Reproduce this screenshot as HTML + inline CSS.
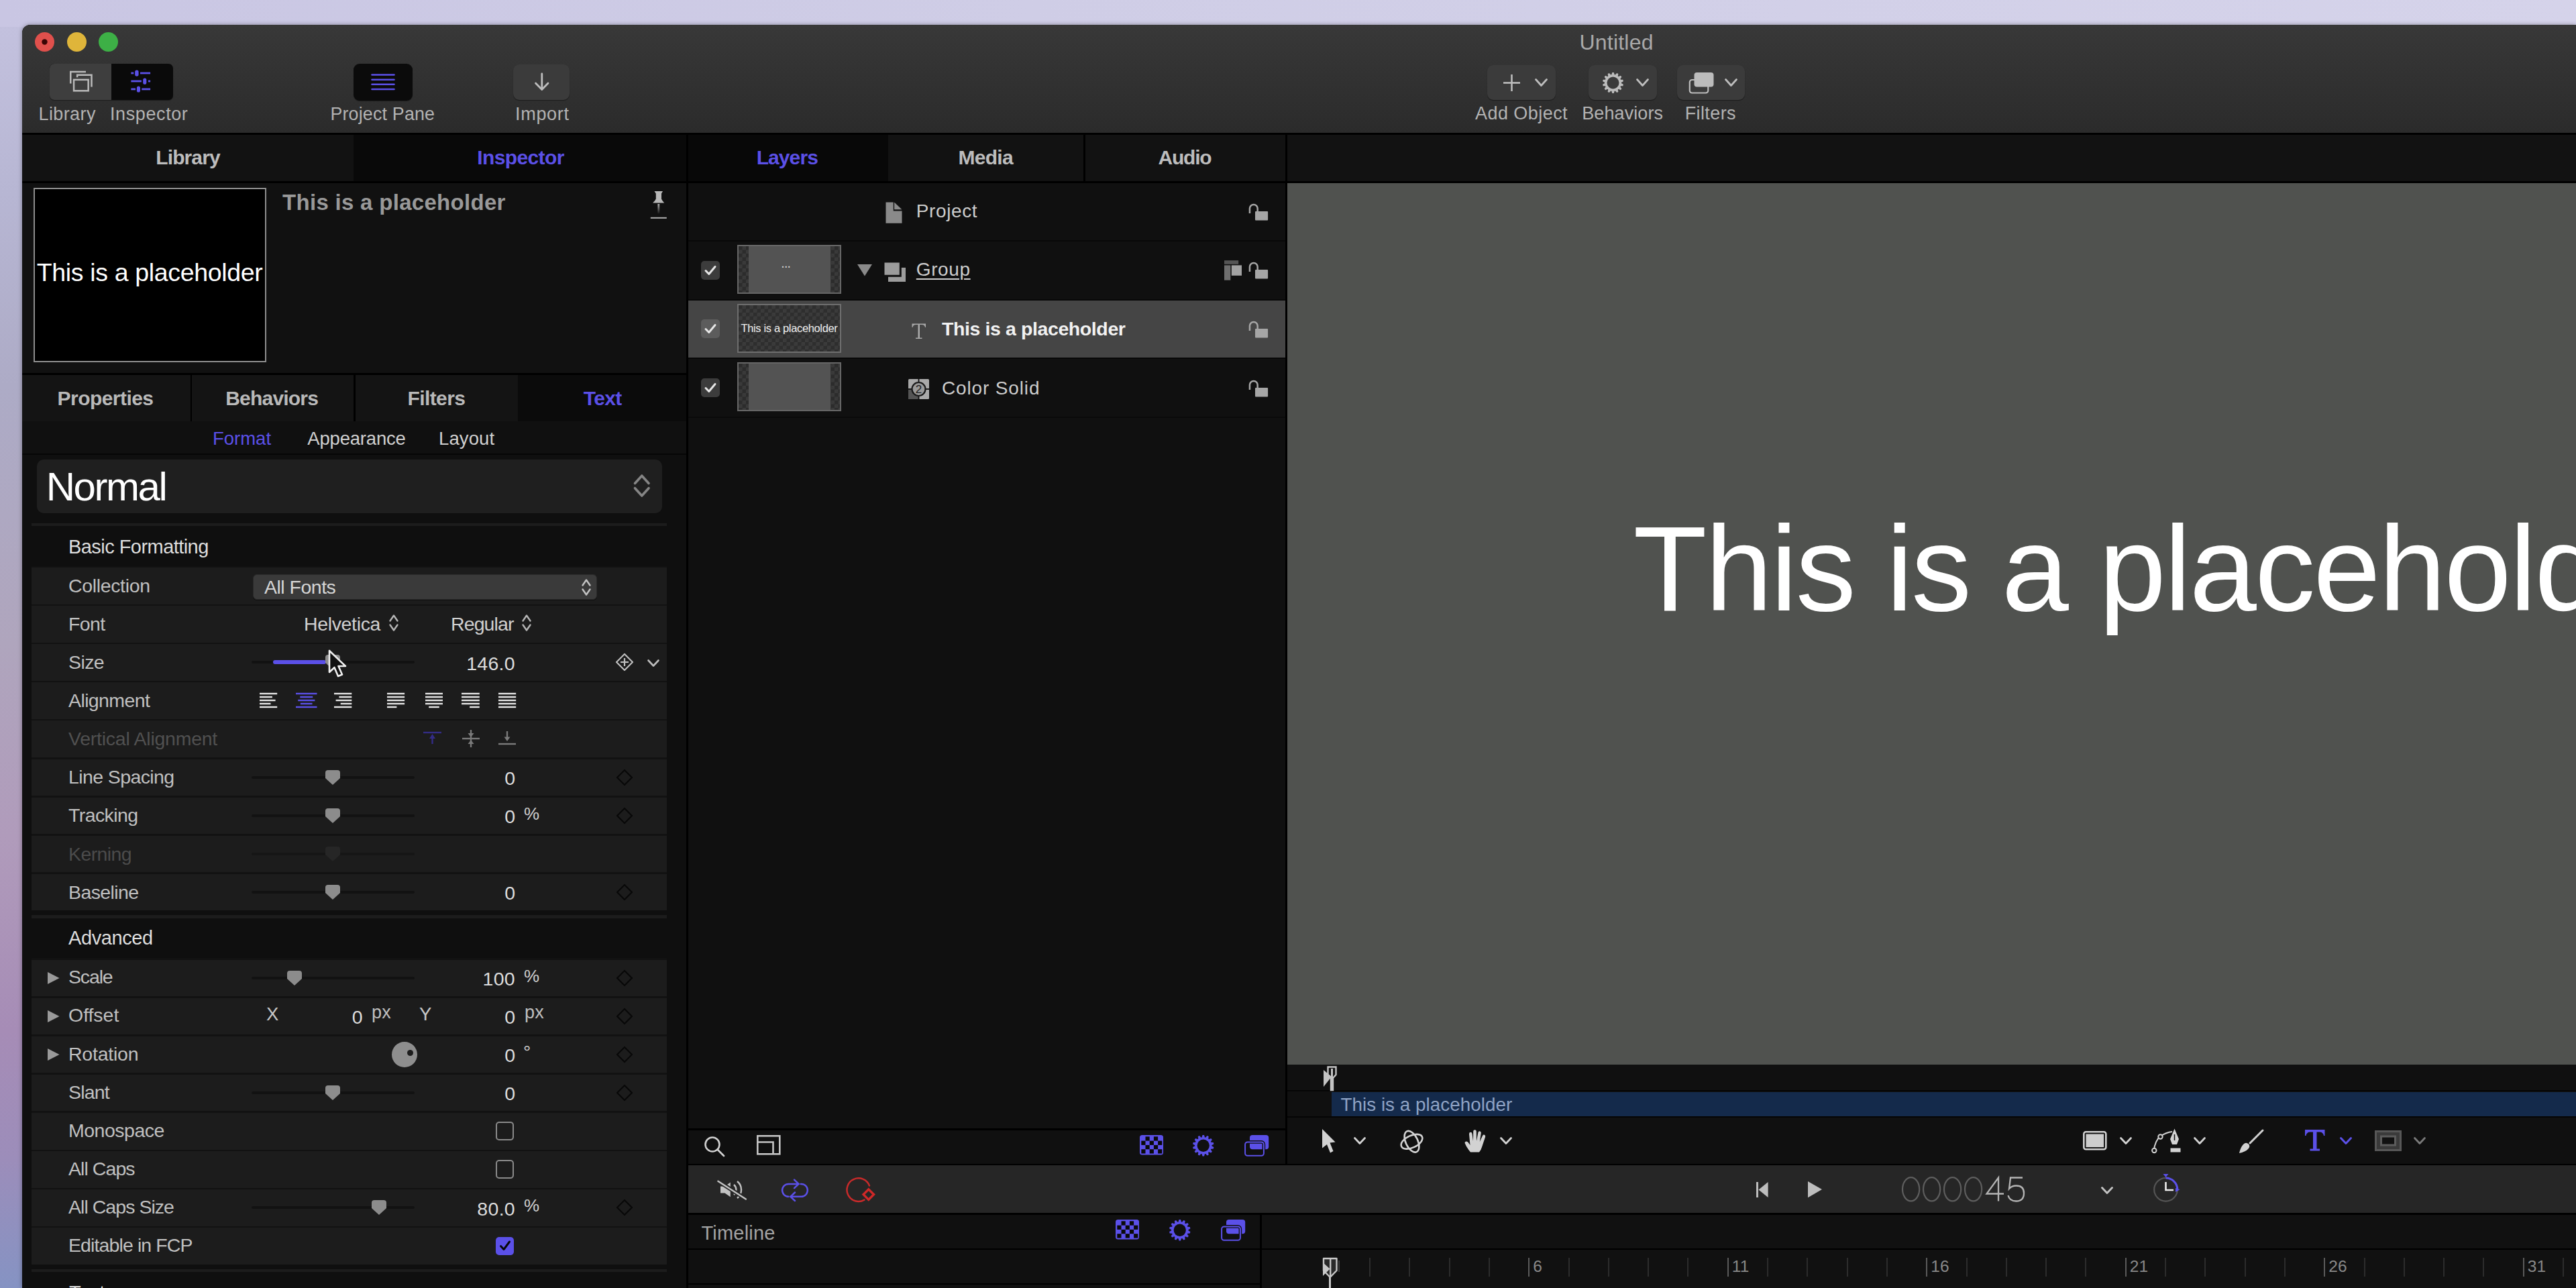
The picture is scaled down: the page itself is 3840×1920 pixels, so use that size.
<!DOCTYPE html><html><head><meta charset="utf-8"><style>
html,body{margin:0;padding:0;}
body{width:3840px;height:1920px;overflow:hidden;position:relative;font-family:"Liberation Sans", sans-serif;
background:linear-gradient(180deg,#cdcbe6 0%,#c3c1de 2%,#b7b6d3 15%,#adabc6 30%,#afa5bd 50%,#b09bbb 65%,#a68cb6 80%,#9c8dba 90%,#8593c3 100%);}
div{box-sizing:border-box;}
svg{overflow:visible}
</style></head><body>
<div style="position:absolute;left:0;top:0;width:3840px;height:40px;background:linear-gradient(90deg,#c9c6e3,#cfcde6 40%,#d5d3ea)"></div>
<div style="position:absolute;left:33px;top:37px;width:3807px;height:1883px;background:#111;border-top-left-radius:12px;overflow:hidden;box-shadow:0 0 6px rgba(0,0,0,0.35)">
<div style="position:absolute;left:0;top:0;width:3807px;height:161px;background:linear-gradient(180deg,#383838,#2b2b2b)"></div>
</div>
<svg style="position:absolute;left:52.0px;top:48.0px;" width="29" height="29" viewBox="0 0 29 29"><circle cx="14.5" cy="14.5" r="14.5" fill="#e0504c"/><circle cx="14.5" cy="14.5" r="4.2" fill="#3a0505"/></svg>
<svg style="position:absolute;left:99.5px;top:48.0px;" width="29" height="29" viewBox="0 0 29 29"><circle cx="14.5" cy="14.5" r="14.5" fill="#dfb53a"/></svg>
<svg style="position:absolute;left:147.0px;top:48.0px;" width="29" height="29" viewBox="0 0 29 29"><circle cx="14.5" cy="14.5" r="14.5" fill="#3db046"/></svg>
<div style="position:absolute;left:74px;top:95px;width:183.5px;height:54.4px;border-radius:7px;overflow:hidden;background:#0a0a0a;box-shadow:0 1px 1px rgba(0,0,0,0.4)"><div style="position:absolute;left:0;top:0;width:92px;height:55px;background:#3e3e3e"></div></div>
<svg style="position:absolute;left:100px;top:102px;" width="42" height="38" viewBox="0 0 42 38"><g fill="none" stroke="#bababa" stroke-width="2.5">
      <polyline points="5.25,22.5 5.25,5 28,5"/>
      <polyline points="15.15,13.2 15.15,9.8 36.5,9.8 36.5,27.6"/>
      <rect x="10.05" y="16.85" width="21.6" height="16.5"/></g></svg>
<svg style="position:absolute;left:192px;top:102px;" width="36" height="38" viewBox="0 0 36 38"><g stroke="#5b50e8" stroke-width="2.8" stroke-linecap="butt">
      <line x1="3.4" y1="7" x2="7.3" y2="7"/><line x1="17" y1="7" x2="32.1" y2="7"/>
      <line x1="3.4" y1="19" x2="18.9" y2="19"/><line x1="29" y1="19" x2="32.1" y2="19"/>
      <line x1="3.4" y1="30.9" x2="10" y2="30.9"/><line x1="19.3" y1="30.9" x2="32.1" y2="30.9"/></g>
      <g fill="#5b50e8"><rect x="9.2" y="2.4" width="5.4" height="9.3" rx="2.7"/><rect x="21.2" y="14.4" width="5.1" height="9.3" rx="2.55"/><rect x="11.9" y="26.4" width="5.1" height="9.1" rx="2.55"/></g></svg>
<div style="position:absolute;left:527px;top:95px;width:88px;height:54.6px;border-radius:9px;background:#0b0b0b;box-shadow:0 1px 1px rgba(0,0,0,0.4)"></div>
<svg style="position:absolute;left:552px;top:108px;" width="38" height="28" viewBox="0 0 38 28"><g stroke="#5b50e8" stroke-width="2.6" stroke-linecap="round"><line x1="2.5" y1="3.5" x2="35.5" y2="3.5"/><line x1="2.5" y1="10.7" x2="35.5" y2="10.7"/><line x1="2.5" y1="17.8" x2="35.5" y2="17.8"/><line x1="2.5" y1="25" x2="35.5" y2="25"/></g></svg>
<div style="position:absolute;left:765px;top:96px;width:84px;height:52.5px;border-radius:9px;background:#3b3b3b;box-shadow:0 1px 1px rgba(0,0,0,0.45)"></div>
<svg style="position:absolute;left:795px;top:107px;" width="26" height="30" viewBox="0 0 26 30"><g fill="none" stroke="#bdbdbd" stroke-width="2.8" stroke-linecap="round" stroke-linejoin="round"><line x1="12.8" y1="3" x2="12.8" y2="26"/><polyline points="3.5,17 12.8,26.5 22,17"/></g></svg>
<div style="position:absolute;left:57.50px;top:156.64px;width:800px;height:27px;line-height:27px;font-size:27px;font-weight:400;color:#b3b3b3;letter-spacing:0.4px;text-align:left;white-space:nowrap;">Library</div>
<div style="position:absolute;left:164.00px;top:156.64px;width:800px;height:27px;line-height:27px;font-size:27px;font-weight:400;color:#b3b3b3;letter-spacing:0.6px;text-align:left;white-space:nowrap;">Inspector</div>
<div style="position:absolute;left:492.40px;top:156.81px;width:800px;height:26.8px;line-height:26.8px;font-size:26.8px;font-weight:400;color:#b3b3b3;letter-spacing:0.2px;text-align:left;white-space:nowrap;">Project Pane</div>
<div style="position:absolute;left:768.00px;top:156.64px;width:800px;height:27px;line-height:27px;font-size:27px;font-weight:400;color:#b3b3b3;letter-spacing:0.7px;text-align:left;white-space:nowrap;">Import</div>
<div style="position:absolute;left:2209.60px;top:47.41px;width:400px;height:32px;line-height:32px;font-size:32px;font-weight:400;color:#a9a9a9;letter-spacing:0.2px;text-align:center;white-space:nowrap;">Untitled</div>
<div style="position:absolute;left:2217.4px;top:97px;width:101.4px;height:51.6px;border-radius:9px;background:#3b3b3b;box-shadow:0 1px 1px rgba(0,0,0,0.45)"></div>
<div style="position:absolute;left:2367.7px;top:97px;width:101.9px;height:51.6px;border-radius:9px;background:#3b3b3b;box-shadow:0 1px 1px rgba(0,0,0,0.45)"></div>
<div style="position:absolute;left:2499.6px;top:97px;width:101.1px;height:51.6px;border-radius:9px;background:#3b3b3b;box-shadow:0 1px 1px rgba(0,0,0,0.45)"></div>
<svg style="position:absolute;left:2241px;top:110.5px;" width="25" height="25" viewBox="0 0 25 25"><g stroke="#bcbcbc" stroke-width="2.6"><line x1="12.5" y1="0" x2="12.5" y2="25"/><line x1="0" y1="12.5" x2="25" y2="12.5"/></g></svg>
<svg style="position:absolute;left:2288.3px;top:116.8px;" width="19" height="12" viewBox="0 0 19 12"><polyline points="1.5,1.5 9.5,10.5 17.5,1.5" fill="none" stroke="#bcbcbc" stroke-width="2.8" stroke-linecap="round" stroke-linejoin="round"/></svg>
<svg style="position:absolute;left:2389px;top:108px;" width="31" height="31" viewBox="0 0 31 31"><circle cx="15.5" cy="15.5" r="12.40" fill="#bcbcbc"/><polygon points="13.18,3.88 14.26,0 16.74,0 17.82,3.88" fill="#bcbcbc" transform="rotate(0.0 15.5 15.5)"/><polygon points="13.18,3.88 14.26,0 16.74,0 17.82,3.88" fill="#bcbcbc" transform="rotate(25.714285714285715 15.5 15.5)"/><polygon points="13.18,3.88 14.26,0 16.74,0 17.82,3.88" fill="#bcbcbc" transform="rotate(51.42857142857143 15.5 15.5)"/><polygon points="13.18,3.88 14.26,0 16.74,0 17.82,3.88" fill="#bcbcbc" transform="rotate(77.14285714285714 15.5 15.5)"/><polygon points="13.18,3.88 14.26,0 16.74,0 17.82,3.88" fill="#bcbcbc" transform="rotate(102.85714285714286 15.5 15.5)"/><polygon points="13.18,3.88 14.26,0 16.74,0 17.82,3.88" fill="#bcbcbc" transform="rotate(128.57142857142858 15.5 15.5)"/><polygon points="13.18,3.88 14.26,0 16.74,0 17.82,3.88" fill="#bcbcbc" transform="rotate(154.28571428571428 15.5 15.5)"/><polygon points="13.18,3.88 14.26,0 16.74,0 17.82,3.88" fill="#bcbcbc" transform="rotate(180.0 15.5 15.5)"/><polygon points="13.18,3.88 14.26,0 16.74,0 17.82,3.88" fill="#bcbcbc" transform="rotate(205.71428571428572 15.5 15.5)"/><polygon points="13.18,3.88 14.26,0 16.74,0 17.82,3.88" fill="#bcbcbc" transform="rotate(231.42857142857142 15.5 15.5)"/><polygon points="13.18,3.88 14.26,0 16.74,0 17.82,3.88" fill="#bcbcbc" transform="rotate(257.14285714285717 15.5 15.5)"/><polygon points="13.18,3.88 14.26,0 16.74,0 17.82,3.88" fill="#bcbcbc" transform="rotate(282.85714285714283 15.5 15.5)"/><polygon points="13.18,3.88 14.26,0 16.74,0 17.82,3.88" fill="#bcbcbc" transform="rotate(308.57142857142856 15.5 15.5)"/><polygon points="13.18,3.88 14.26,0 16.74,0 17.82,3.88" fill="#bcbcbc" transform="rotate(334.2857142857143 15.5 15.5)"/><circle cx="15.5" cy="15.5" r="8.99" fill="#3b3b3b"/></svg>
<svg style="position:absolute;left:2439.0px;top:116.8px;" width="19" height="12" viewBox="0 0 19 12"><polyline points="1.5,1.5 9.5,10.5 17.5,1.5" fill="none" stroke="#bcbcbc" stroke-width="2.8" stroke-linecap="round" stroke-linejoin="round"/></svg>
<svg style="position:absolute;left:2517px;top:107px;" width="40" height="33" viewBox="0 0 40 33"><rect x="8.5" y="1" width="29" height="21.5" rx="4" fill="#bcbcbc"/><rect x="1.8" y="12" width="27.5" height="19.5" rx="3.5" fill="none" stroke="#bcbcbc" stroke-width="2.2"/></svg>
<svg style="position:absolute;left:2570.5px;top:116.8px;" width="19" height="12" viewBox="0 0 19 12"><polyline points="1.5,1.5 9.5,10.5 17.5,1.5" fill="none" stroke="#bcbcbc" stroke-width="2.8" stroke-linecap="round" stroke-linejoin="round"/></svg>
<div style="position:absolute;left:2118.00px;top:156.14px;width:300px;height:27px;line-height:27px;font-size:27px;font-weight:400;color:#b3b3b3;letter-spacing:0.45px;text-align:center;white-space:nowrap;">Add Object</div>
<div style="position:absolute;left:2268.70px;top:156.14px;width:300px;height:27px;line-height:27px;font-size:27px;font-weight:400;color:#b3b3b3;letter-spacing:0.1px;text-align:center;white-space:nowrap;">Behaviors</div>
<div style="position:absolute;left:2399.80px;top:156.14px;width:300px;height:27px;line-height:27px;font-size:27px;font-weight:400;color:#b3b3b3;letter-spacing:0.4px;text-align:center;white-space:nowrap;">Filters</div>
<div style="position:absolute;left:33px;top:197.5px;width:3807px;height:3.0px;background:#000;"></div>
<div style="position:absolute;left:33px;top:200.5px;width:494px;height:69.5px;background:#121212;"></div>
<div style="position:absolute;left:527px;top:200.5px;width:496px;height:69.5px;background:#090909;"></div>
<div style="position:absolute;left:33px;top:270px;width:990px;height:2.5px;background:#000;"></div>
<div style="position:absolute;left:130.00px;top:219.60px;width:300px;height:30px;line-height:30px;font-size:30px;font-weight:700;color:#bdbdbd;letter-spacing:-0.9px;text-align:center;white-space:nowrap;">Library</div>
<div style="position:absolute;left:626.00px;top:219.91px;width:300px;height:30px;line-height:30px;font-size:30px;font-weight:700;color:#5b50e8;letter-spacing:-0.6px;text-align:center;white-space:nowrap;">Inspector</div>
<div style="position:absolute;left:33px;top:272.5px;width:990px;height:283.5px;background:#111111;"></div>
<div style="position:absolute;left:50px;top:279.5px;width:346.5px;height:260.5px;background:#000;border:2.5px solid #8e8e8e"></div>
<div style="position:absolute;left:23.00px;top:387.76px;width:400px;height:37.5px;line-height:37.5px;font-size:37.5px;font-weight:400;color:#ffffff;letter-spacing:-0.35px;text-align:center;white-space:nowrap;">This is a placeholder</div>
<div style="position:absolute;left:421.00px;top:284.57px;width:800px;height:33px;line-height:33px;font-size:33px;font-weight:700;color:#999999;letter-spacing:0.3px;text-align:left;white-space:nowrap;">This is a placeholder</div>
<svg style="position:absolute;left:968px;top:282px;" width="28" height="46" viewBox="0 0 28 46"><defs><linearGradient id="ndl" x1="0" y1="0" x2="0" y2="1"><stop offset="0" stop-color="#b0b0b0"/><stop offset="1" stop-color="#111"/></linearGradient></defs><path d="M7.5,3 H20 L18,6.5 V14.5 Q19,17 22.2,20.6 H5.1 Q8.8,17 9.8,14.5 V6.5 Z" fill="#b8b8b8"/><rect x="12.4" y="22" width="2.8" height="15" fill="url(#ndl)"/><rect x="1.8" y="41.8" width="24" height="2" fill="#b0b0b0"/></svg>
<div style="position:absolute;left:33px;top:556px;width:990px;height:2.7000000000000455px;background:#000;"></div>
<div style="position:absolute;left:33px;top:558.7px;width:250.5px;height:69.5px;background:#141414;"></div>
<div style="position:absolute;left:283.5px;top:558.7px;width:2.5px;height:69.5px;background:#000;"></div>
<div style="position:absolute;left:286px;top:558.7px;width:241px;height:69.5px;background:#141414;"></div>
<div style="position:absolute;left:527px;top:558.7px;width:2.5px;height:69.5px;background:#000;"></div>
<div style="position:absolute;left:529.5px;top:558.7px;width:242.5px;height:69.5px;background:#141414;"></div>
<div style="position:absolute;left:772px;top:558.7px;width:251px;height:69.5px;background:#0b0b0b;"></div>
<div style="position:absolute;left:7.00px;top:579.11px;width:300px;height:30px;line-height:30px;font-size:30px;font-weight:700;color:#b9b9b9;letter-spacing:-0.55px;text-align:center;white-space:nowrap;">Properties</div>
<div style="position:absolute;left:255.20px;top:579.11px;width:300px;height:30px;line-height:30px;font-size:30px;font-weight:700;color:#b9b9b9;letter-spacing:-0.8px;text-align:center;white-space:nowrap;">Behaviors</div>
<div style="position:absolute;left:500.40px;top:579.11px;width:300px;height:30px;line-height:30px;font-size:30px;font-weight:700;color:#b9b9b9;letter-spacing:-0.6px;text-align:center;white-space:nowrap;">Filters</div>
<div style="position:absolute;left:748.20px;top:579.11px;width:300px;height:30px;line-height:30px;font-size:30px;font-weight:700;color:#5b50e8;letter-spacing:-0.7px;text-align:center;white-space:nowrap;">Text</div>
<div style="position:absolute;left:33px;top:628.2px;width:990px;height:47.59999999999991px;background:#101010;"></div>
<div style="position:absolute;left:33px;top:675.8px;width:990px;height:2.5px;background:#060606;"></div>
<div style="position:absolute;left:210.50px;top:640.42px;width:300px;height:27.5px;line-height:27.5px;font-size:27.5px;font-weight:400;color:#5b50e8;letter-spacing:0.0px;text-align:center;white-space:nowrap;">Format</div>
<div style="position:absolute;left:381.50px;top:640.42px;width:300px;height:27.5px;line-height:27.5px;font-size:27.5px;font-weight:400;color:#d0d0d0;letter-spacing:-0.2px;text-align:center;white-space:nowrap;">Appearance</div>
<div style="position:absolute;left:545.60px;top:640.42px;width:300px;height:27.5px;line-height:27.5px;font-size:27.5px;font-weight:400;color:#d0d0d0;letter-spacing:0.1px;text-align:center;white-space:nowrap;">Layout</div>
<div style="position:absolute;left:33px;top:678.3px;width:990px;height:1241.7px;background:#0f0f0f;"></div>
<div style="position:absolute;left:54.5px;top:685px;width:932.5px;height:79.60000000000002px;background:#1f1f1f;border-radius:10px"></div>
<div style="position:absolute;left:68.70px;top:695.71px;width:800px;height:60px;line-height:60px;font-size:60px;font-weight:400;color:#ffffff;letter-spacing:-2.45px;text-align:left;white-space:nowrap;">Normal</div>
<svg style="position:absolute;left:944px;top:706px;" width="26" height="36" viewBox="0 0 26 36"><g fill="none" stroke="#858585" stroke-width="3.6" stroke-linecap="round" stroke-linejoin="round"><polyline points="2.5,14.5 12.8,3.2 23,14.5"/><polyline points="2.5,21.7 12.8,33 23,21.7"/></g></svg>
<div style="position:absolute;left:47px;top:780.2px;width:947px;height:4.199999999999932px;background:#1c1c1c;"></div>
<div style="position:absolute;left:102.00px;top:800.85px;width:800px;height:29px;line-height:29px;font-size:29px;font-weight:400;color:#dedede;letter-spacing:-0.55px;text-align:left;white-space:nowrap;">Basic Formatting</div>
<div style="position:absolute;left:47px;top:843.6px;width:947px;height:513.6px;background:#121212;"></div>
<div style="position:absolute;left:47px;top:845.9999999999999px;width:947px;height:54.500000000000114px;background:#1c1c1c;"></div>
<div style="position:absolute;left:47px;top:903.0999999999999px;width:947px;height:54.500000000000114px;background:#1c1c1c;"></div>
<div style="position:absolute;left:47px;top:960.1999999999999px;width:947px;height:54.500000000000114px;background:#1c1c1c;"></div>
<div style="position:absolute;left:47px;top:1017.3px;width:947px;height:54.5px;background:#1c1c1c;"></div>
<div style="position:absolute;left:47px;top:1074.3999999999999px;width:947px;height:54.5px;background:#1c1c1c;"></div>
<div style="position:absolute;left:47px;top:1131.5px;width:947px;height:54.5px;background:#1c1c1c;"></div>
<div style="position:absolute;left:47px;top:1188.6px;width:947px;height:54.5px;background:#1c1c1c;"></div>
<div style="position:absolute;left:47px;top:1245.7px;width:947px;height:54.5px;background:#1c1c1c;"></div>
<div style="position:absolute;left:47px;top:1302.8px;width:947px;height:54.5px;background:#1c1c1c;"></div>
<div style="position:absolute;left:102.00px;top:858.87px;width:800px;height:28.5px;line-height:28.5px;font-size:28.5px;font-weight:400;color:#c0c0c0;letter-spacing:-0.35px;text-align:left;white-space:nowrap;">Collection</div>
<div style="position:absolute;left:102.00px;top:915.97px;width:800px;height:28.5px;line-height:28.5px;font-size:28.5px;font-weight:400;color:#c0c0c0;letter-spacing:-0.6px;text-align:left;white-space:nowrap;">Font</div>
<div style="position:absolute;left:102.00px;top:973.07px;width:800px;height:28.5px;line-height:28.5px;font-size:28.5px;font-weight:400;color:#c0c0c0;letter-spacing:-0.6px;text-align:left;white-space:nowrap;">Size</div>
<div style="position:absolute;left:102.00px;top:1030.17px;width:800px;height:28.5px;line-height:28.5px;font-size:28.5px;font-weight:400;color:#c0c0c0;letter-spacing:-0.6px;text-align:left;white-space:nowrap;">Alignment</div>
<div style="position:absolute;left:102.00px;top:1087.27px;width:800px;height:28.5px;line-height:28.5px;font-size:28.5px;font-weight:400;color:#505050;letter-spacing:-0.25px;text-align:left;white-space:nowrap;">Vertical Alignment</div>
<div style="position:absolute;left:102.00px;top:1144.37px;width:800px;height:28.5px;line-height:28.5px;font-size:28.5px;font-weight:400;color:#c0c0c0;letter-spacing:-0.6px;text-align:left;white-space:nowrap;">Line Spacing</div>
<div style="position:absolute;left:102.00px;top:1201.47px;width:800px;height:28.5px;line-height:28.5px;font-size:28.5px;font-weight:400;color:#c0c0c0;letter-spacing:-0.6px;text-align:left;white-space:nowrap;">Tracking</div>
<div style="position:absolute;left:102.00px;top:1258.57px;width:800px;height:28.5px;line-height:28.5px;font-size:28.5px;font-weight:400;color:#4b4b4b;letter-spacing:-0.6px;text-align:left;white-space:nowrap;">Kerning</div>
<div style="position:absolute;left:102.00px;top:1315.67px;width:800px;height:28.5px;line-height:28.5px;font-size:28.5px;font-weight:400;color:#c0c0c0;letter-spacing:-0.6px;text-align:left;white-space:nowrap;">Baseline</div>
<div style="position:absolute;left:376.7px;top:855.7px;width:513.3px;height:38.69999999999993px;background:#3a3a3a;border-radius:6px;border:1px solid #2a2a2a;box-shadow:0 1px 0 rgba(0,0,0,0.5)"></div>
<div style="position:absolute;left:394.00px;top:860.87px;width:800px;height:28.5px;line-height:28.5px;font-size:28.5px;font-weight:400;color:#d6d6d6;letter-spacing:-0.5px;text-align:left;white-space:nowrap;">All Fonts</div>
<svg style="position:absolute;left:867.0px;top:862.5px;" width="14" height="25" viewBox="0 0 14 25"><g fill="none" stroke="#c4c4c4" stroke-width="2.4" stroke-linecap="round" stroke-linejoin="round"><polyline points="1.5,9.5 7.0,1.5 12.5,9.5"/><polyline points="1.5,15.5 7.0,23.5 12.5,15.5"/></g></svg>
<div style="position:absolute;left:453.00px;top:915.57px;width:800px;height:28.5px;line-height:28.5px;font-size:28.5px;font-weight:400;color:#d0d0d0;letter-spacing:-0.35px;text-align:left;white-space:nowrap;">Helvetica</div>
<svg style="position:absolute;left:580.0px;top:916.0px;" width="14" height="25" viewBox="0 0 14 25"><g fill="none" stroke="#b5b5b5" stroke-width="2.4" stroke-linecap="round" stroke-linejoin="round"><polyline points="1.5,9.5 7.0,1.5 12.5,9.5"/><polyline points="1.5,15.5 7.0,23.5 12.5,15.5"/></g></svg>
<div style="position:absolute;left:672.00px;top:915.57px;width:800px;height:28.5px;line-height:28.5px;font-size:28.5px;font-weight:400;color:#d0d0d0;letter-spacing:-0.9px;text-align:left;white-space:nowrap;">Regular</div>
<svg style="position:absolute;left:778.0px;top:916.0px;" width="14" height="25" viewBox="0 0 14 25"><g fill="none" stroke="#b5b5b5" stroke-width="2.4" stroke-linecap="round" stroke-linejoin="round"><polyline points="1.5,9.5 7.0,1.5 12.5,9.5"/><polyline points="1.5,15.5 7.0,23.5 12.5,15.5"/></g></svg>
<div style="position:absolute;left:375px;top:985.1999999999999px;width:243px;height:4.0px;background:#121212;border-radius:2px"></div>
<div style="position:absolute;left:407px;top:984.1999999999999px;width:79px;height:6.0px;background:#5b50e8;border-radius:3px"></div>
<svg style="position:absolute;left:485px;top:976.1999999999999px;" width="22" height="22" viewBox="0 0 22 22"><path d="M4,0 H18 Q22,0 22,4 V12 L11,22 L0,12 V4 Q0,0 4,0 Z" fill="#8c8c8c"/></svg>
<div style="position:absolute;left:568.00px;top:974.97px;width:200px;height:28.5px;line-height:28.5px;font-size:28.5px;font-weight:400;color:#dcdcdc;letter-spacing:0.3px;text-align:right;white-space:nowrap;">146.0</div>
<svg style="position:absolute;left:917.8px;top:974.1999999999999px;" width="26" height="26" viewBox="0 0 26 26"><polygon points="13,1 25,13 13,25 1,13" fill="none" stroke="#bdbdbd" stroke-width="2.2" stroke-linejoin="round"/><g stroke="#bdbdbd" stroke-width="2.2"><line x1="13" y1="7" x2="13" y2="19"/><line x1="7" y1="13" x2="19" y2="13"/></g></svg>
<svg style="position:absolute;left:964.7px;top:982.6999999999999px;" width="18" height="11" viewBox="0 0 18 11"><polyline points="1.5,1.5 9.0,9.5 16.5,1.5" fill="none" stroke="#bdbdbd" stroke-width="2.6" stroke-linecap="round" stroke-linejoin="round"/></svg>
<svg style="position:absolute;left:488px;top:968px;" width="32" height="46" viewBox="0 0 32 46"><path d="M3,2 L3,34 L10.5,27 L16,40 L22,37.5 L16.5,25 L27,25 Z" fill="#111" stroke="#f0f0f0" stroke-width="2.6" stroke-linejoin="round"/></svg>
<svg style="position:absolute;left:386.8px;top:1032.3px;" width="26.2" height="24" viewBox="0 0 26.2 24"><rect x="0.0" y="0.8" width="26.2" height="2.4" fill="#e6e6e6"/><rect x="0.0" y="5.8" width="18.9" height="2.4" fill="#e6e6e6"/><rect x="0.0" y="10.8" width="23.6" height="2.4" fill="#e6e6e6"/><rect x="0.0" y="15.8" width="16.5" height="2.4" fill="#e6e6e6"/><rect x="0.0" y="20.8" width="26.2" height="2.4" fill="#e6e6e6"/></svg>
<svg style="position:absolute;left:441px;top:1032.3px;" width="31.5" height="24" viewBox="0 0 31.5 24"><rect x="0.0" y="0.8" width="31.5" height="2.4" fill="#5b50e8"/><rect x="6.3" y="5.8" width="18.9" height="2.4" fill="#5b50e8"/><rect x="3.2" y="10.8" width="25.2" height="2.4" fill="#5b50e8"/><rect x="6.9" y="15.8" width="17.6" height="2.4" fill="#5b50e8"/><rect x="0.0" y="20.8" width="31.5" height="2.4" fill="#5b50e8"/></svg>
<svg style="position:absolute;left:498.4px;top:1032.3px;" width="26.3" height="24" viewBox="0 0 26.3 24"><rect x="0.0" y="0.8" width="26.3" height="2.4" fill="#e6e6e6"/><rect x="7.4" y="5.8" width="18.9" height="2.4" fill="#e6e6e6"/><rect x="2.6" y="10.8" width="23.7" height="2.4" fill="#e6e6e6"/><rect x="9.7" y="15.8" width="16.6" height="2.4" fill="#e6e6e6"/><rect x="0.0" y="20.8" width="26.3" height="2.4" fill="#e6e6e6"/></svg>
<svg style="position:absolute;left:576.9px;top:1032.3px;" width="26.1" height="24" viewBox="0 0 26.1 24"><rect x="0.0" y="0.8" width="26.1" height="2.4" fill="#e6e6e6"/><rect x="0.0" y="5.8" width="26.1" height="2.4" fill="#e6e6e6"/><rect x="0.0" y="10.8" width="26.1" height="2.4" fill="#e6e6e6"/><rect x="0.0" y="15.8" width="26.1" height="2.4" fill="#e6e6e6"/><rect x="0.0" y="20.8" width="14.4" height="2.4" fill="#e6e6e6"/></svg>
<svg style="position:absolute;left:634px;top:1032.3px;" width="26" height="24" viewBox="0 0 26 24"><rect x="0.0" y="0.8" width="26.0" height="2.4" fill="#e6e6e6"/><rect x="0.0" y="5.8" width="26.0" height="2.4" fill="#e6e6e6"/><rect x="0.0" y="10.8" width="26.0" height="2.4" fill="#e6e6e6"/><rect x="0.0" y="15.8" width="26.0" height="2.4" fill="#e6e6e6"/><rect x="5.2" y="20.8" width="15.6" height="2.4" fill="#e6e6e6"/></svg>
<svg style="position:absolute;left:688px;top:1032.3px;" width="26.8" height="24" viewBox="0 0 26.8 24"><rect x="0.0" y="0.8" width="26.8" height="2.4" fill="#e6e6e6"/><rect x="0.0" y="5.8" width="26.8" height="2.4" fill="#e6e6e6"/><rect x="0.0" y="10.8" width="26.8" height="2.4" fill="#e6e6e6"/><rect x="0.0" y="15.8" width="26.8" height="2.4" fill="#e6e6e6"/><rect x="12.1" y="20.8" width="14.7" height="2.4" fill="#e6e6e6"/></svg>
<svg style="position:absolute;left:743px;top:1032.3px;" width="26.2" height="24" viewBox="0 0 26.2 24"><rect x="0.0" y="0.8" width="26.2" height="2.4" fill="#e6e6e6"/><rect x="0.0" y="5.8" width="26.2" height="2.4" fill="#e6e6e6"/><rect x="0.0" y="10.8" width="26.2" height="2.4" fill="#e6e6e6"/><rect x="0.0" y="15.8" width="26.2" height="2.4" fill="#e6e6e6"/><rect x="0.0" y="20.8" width="26.2" height="2.4" fill="#e6e6e6"/></svg>
<svg style="position:absolute;left:631.3px;top:1089.3999999999999px;" width="27" height="24" viewBox="0 0 27 24"><g stroke="#332c86" stroke-width="2.4"><line x1="0" y1="3" x2="27" y2="3"/><line x1="13.5" y1="7" x2="13.5" y2="20"/></g><polygon points="13.5,5 9,12 18,12" fill="#332c86"/></svg>
<svg style="position:absolute;left:688.5px;top:1088.3999999999999px;" width="26" height="26" viewBox="0 0 26 26"><g stroke="#7a7a7a" stroke-width="2.4"><line x1="0" y1="13" x2="26" y2="13"/><line x1="13" y1="0" x2="13" y2="26"/></g><polygon points="13,11 8.5,5 17.5,5" fill="#7a7a7a"/><polygon points="13,15 8.5,21 17.5,21" fill="#7a7a7a"/></svg>
<svg style="position:absolute;left:743px;top:1089.3999999999999px;" width="26" height="24" viewBox="0 0 26 24"><g stroke="#7a7a7a" stroke-width="2.4"><line x1="0" y1="20" x2="26" y2="20"/><line x1="13" y1="1" x2="13" y2="12"/></g><polygon points="13,16 8.5,9.5 17.5,9.5" fill="#7a7a7a"/></svg>
<div style="position:absolute;left:375px;top:1156.5px;width:243px;height:4.0px;background:#121212;border-radius:2px"></div>
<svg style="position:absolute;left:485px;top:1147.5px;" width="22" height="22" viewBox="0 0 22 22"><path d="M4,0 H18 Q22,0 22,4 V12 L11,22 L0,12 V4 Q0,0 4,0 Z" fill="#8c8c8c"/></svg>
<div style="position:absolute;left:568.00px;top:1146.07px;width:200px;height:28.5px;line-height:28.5px;font-size:28.5px;font-weight:400;color:#dcdcdc;letter-spacing:0px;text-align:right;white-space:nowrap;">0</div>
<svg style="position:absolute;left:918.8px;top:1146.5px;" width="24" height="24" viewBox="0 0 24 24"><polygon points="12,1 23,12 12,23 1,12" fill="none" stroke="#080808" stroke-width="2.2" stroke-linejoin="round"/></svg>
<div style="position:absolute;left:375px;top:1213.6px;width:243px;height:4.0px;background:#121212;border-radius:2px"></div>
<svg style="position:absolute;left:485px;top:1204.6px;" width="22" height="22" viewBox="0 0 22 22"><path d="M4,0 H18 Q22,0 22,4 V12 L11,22 L0,12 V4 Q0,0 4,0 Z" fill="#8c8c8c"/></svg>
<div style="position:absolute;left:568.00px;top:1203.17px;width:200px;height:28.5px;line-height:28.5px;font-size:28.5px;font-weight:400;color:#dcdcdc;letter-spacing:0px;text-align:right;white-space:nowrap;">0</div>
<svg style="position:absolute;left:918.8px;top:1203.6px;" width="24" height="24" viewBox="0 0 24 24"><polygon points="12,1 23,12 12,23 1,12" fill="none" stroke="#080808" stroke-width="2.2" stroke-linejoin="round"/></svg>
<div style="position:absolute;left:781.00px;top:1199.79px;width:800px;height:26px;line-height:26px;font-size:26px;font-weight:400;color:#cfcfcf;letter-spacing:0px;text-align:left;white-space:nowrap;">%</div>
<div style="position:absolute;left:375px;top:1270.7px;width:243px;height:4.0px;background:#161616;border-radius:2px"></div>
<svg style="position:absolute;left:485px;top:1261.7px;" width="22" height="22" viewBox="0 0 22 22"><path d="M4,0 H18 Q22,0 22,4 V12 L11,22 L0,12 V4 Q0,0 4,0 Z" fill="#262626"/></svg>
<div style="position:absolute;left:375px;top:1327.8px;width:243px;height:4.0px;background:#121212;border-radius:2px"></div>
<svg style="position:absolute;left:485px;top:1318.8px;" width="22" height="22" viewBox="0 0 22 22"><path d="M4,0 H18 Q22,0 22,4 V12 L11,22 L0,12 V4 Q0,0 4,0 Z" fill="#8c8c8c"/></svg>
<div style="position:absolute;left:568.00px;top:1317.37px;width:200px;height:28.5px;line-height:28.5px;font-size:28.5px;font-weight:400;color:#dcdcdc;letter-spacing:0px;text-align:right;white-space:nowrap;">0</div>
<svg style="position:absolute;left:918.8px;top:1317.8px;" width="24" height="24" viewBox="0 0 24 24"><polygon points="12,1 23,12 12,23 1,12" fill="none" stroke="#080808" stroke-width="2.2" stroke-linejoin="round"/></svg>
<div style="position:absolute;left:47px;top:1364.3px;width:947px;height:4.600000000000136px;background:#1c1c1c;"></div>
<div style="position:absolute;left:102.00px;top:1384.45px;width:800px;height:29px;line-height:29px;font-size:29px;font-weight:400;color:#dedede;letter-spacing:-0.4px;text-align:left;white-space:nowrap;">Advanced</div>
<div style="position:absolute;left:47px;top:1427.7px;width:947px;height:457.0999999999999px;background:#121212;"></div>
<div style="position:absolute;left:47px;top:1430.6000000000001px;width:947px;height:54.5px;background:#1c1c1c;"></div>
<div style="position:absolute;left:47px;top:1487.7px;width:947px;height:54.5px;background:#1c1c1c;"></div>
<div style="position:absolute;left:47px;top:1544.8px;width:947px;height:54.5px;background:#1c1c1c;"></div>
<div style="position:absolute;left:47px;top:1601.9px;width:947px;height:54.5px;background:#1c1c1c;"></div>
<div style="position:absolute;left:47px;top:1659.0px;width:947px;height:54.5px;background:#1c1c1c;"></div>
<div style="position:absolute;left:47px;top:1716.1000000000001px;width:947px;height:54.5px;background:#1c1c1c;"></div>
<div style="position:absolute;left:47px;top:1773.2px;width:947px;height:54.5px;background:#1c1c1c;"></div>
<div style="position:absolute;left:47px;top:1830.3px;width:947px;height:54.5px;background:#1c1c1c;"></div>
<div style="position:absolute;left:102.00px;top:1442.37px;width:800px;height:28.5px;line-height:28.5px;font-size:28.5px;font-weight:400;color:#c0c0c0;letter-spacing:-1.15px;text-align:left;white-space:nowrap;">Scale</div>
<div style="position:absolute;left:102.00px;top:1499.47px;width:800px;height:28.5px;line-height:28.5px;font-size:28.5px;font-weight:400;color:#c0c0c0;letter-spacing:-0.04px;text-align:left;white-space:nowrap;">Offset</div>
<div style="position:absolute;left:102.00px;top:1556.57px;width:800px;height:28.5px;line-height:28.5px;font-size:28.5px;font-weight:400;color:#c0c0c0;letter-spacing:-0.23px;text-align:left;white-space:nowrap;">Rotation</div>
<div style="position:absolute;left:102.00px;top:1613.67px;width:800px;height:28.5px;line-height:28.5px;font-size:28.5px;font-weight:400;color:#c0c0c0;letter-spacing:-0.85px;text-align:left;white-space:nowrap;">Slant</div>
<div style="position:absolute;left:102.00px;top:1670.77px;width:800px;height:28.5px;line-height:28.5px;font-size:28.5px;font-weight:400;color:#c0c0c0;letter-spacing:-0.5px;text-align:left;white-space:nowrap;">Monospace</div>
<div style="position:absolute;left:102.00px;top:1727.87px;width:800px;height:28.5px;line-height:28.5px;font-size:28.5px;font-weight:400;color:#c0c0c0;letter-spacing:-0.94px;text-align:left;white-space:nowrap;">All Caps</div>
<div style="position:absolute;left:102.00px;top:1784.97px;width:800px;height:28.5px;line-height:28.5px;font-size:28.5px;font-weight:400;color:#c0c0c0;letter-spacing:-0.96px;text-align:left;white-space:nowrap;">All Caps Size</div>
<div style="position:absolute;left:102.00px;top:1842.07px;width:800px;height:28.5px;line-height:28.5px;font-size:28.5px;font-weight:400;color:#c0c0c0;letter-spacing:-0.89px;text-align:left;white-space:nowrap;">Editable in FCP</div>
<svg style="position:absolute;left:70.6px;top:1448.6000000000001px;" width="18" height="18" viewBox="0 0 18 18"><polygon points="0,0 17.5,9 0,18" fill="#9a9a9a"/></svg>
<svg style="position:absolute;left:70.6px;top:1505.7px;" width="18" height="18" viewBox="0 0 18 18"><polygon points="0,0 17.5,9 0,18" fill="#9a9a9a"/></svg>
<svg style="position:absolute;left:70.6px;top:1562.8px;" width="18" height="18" viewBox="0 0 18 18"><polygon points="0,0 17.5,9 0,18" fill="#9a9a9a"/></svg>
<div style="position:absolute;left:375px;top:1455.6000000000001px;width:243px;height:4.0px;background:#121212;border-radius:2px"></div>
<svg style="position:absolute;left:427.8px;top:1446.6000000000001px;" width="22" height="22" viewBox="0 0 22 22"><path d="M4,0 H18 Q22,0 22,4 V12 L11,22 L0,12 V4 Q0,0 4,0 Z" fill="#8c8c8c"/></svg>
<div style="position:absolute;left:568.00px;top:1445.17px;width:200px;height:28.5px;line-height:28.5px;font-size:28.5px;font-weight:400;color:#dcdcdc;letter-spacing:0.3px;text-align:right;white-space:nowrap;">100</div>
<div style="position:absolute;left:781.00px;top:1441.79px;width:800px;height:26px;line-height:26px;font-size:26px;font-weight:400;color:#cfcfcf;letter-spacing:0px;text-align:left;white-space:nowrap;">%</div>
<svg style="position:absolute;left:918.8px;top:1445.6000000000001px;" width="24" height="24" viewBox="0 0 24 24"><polygon points="12,1 23,12 12,23 1,12" fill="none" stroke="#080808" stroke-width="2.2" stroke-linejoin="round"/></svg>
<div style="position:absolute;left:397.00px;top:1498.32px;width:800px;height:27.5px;line-height:27.5px;font-size:27.5px;font-weight:400;color:#c8c8c8;letter-spacing:0px;text-align:left;white-space:nowrap;">X</div>
<div style="position:absolute;left:440.50px;top:1502.27px;width:100px;height:28.5px;line-height:28.5px;font-size:28.5px;font-weight:400;color:#dcdcdc;letter-spacing:0px;text-align:right;white-space:nowrap;">0</div>
<div style="position:absolute;left:554.00px;top:1495.64px;width:800px;height:27px;line-height:27px;font-size:27px;font-weight:400;color:#c0c0c0;letter-spacing:0.3px;text-align:left;white-space:nowrap;">px</div>
<div style="position:absolute;left:625.00px;top:1498.32px;width:800px;height:27.5px;line-height:27.5px;font-size:27.5px;font-weight:400;color:#c8c8c8;letter-spacing:0px;text-align:left;white-space:nowrap;">Y</div>
<div style="position:absolute;left:668.00px;top:1502.27px;width:100px;height:28.5px;line-height:28.5px;font-size:28.5px;font-weight:400;color:#dcdcdc;letter-spacing:0px;text-align:right;white-space:nowrap;">0</div>
<div style="position:absolute;left:782.00px;top:1495.64px;width:800px;height:27px;line-height:27px;font-size:27px;font-weight:400;color:#c0c0c0;letter-spacing:0.3px;text-align:left;white-space:nowrap;">px</div>
<svg style="position:absolute;left:918.8px;top:1502.7px;" width="24" height="24" viewBox="0 0 24 24"><polygon points="12,1 23,12 12,23 1,12" fill="none" stroke="#080808" stroke-width="2.2" stroke-linejoin="round"/></svg>
<svg style="position:absolute;left:583.7px;top:1552.8px;" width="38" height="38" viewBox="0 0 38 38"><circle cx="19" cy="19" r="19" fill="#8e8e8e"/><circle cx="27.5" cy="16.5" r="4.5" fill="#1c1c1c"/></svg>
<div style="position:absolute;left:668.00px;top:1559.37px;width:100px;height:28.5px;line-height:28.5px;font-size:28.5px;font-weight:400;color:#dcdcdc;letter-spacing:0px;text-align:right;white-space:nowrap;">0</div>
<div style="position:absolute;left:780.00px;top:1555.10px;width:800px;height:28px;line-height:28px;font-size:28px;font-weight:400;color:#cfcfcf;letter-spacing:0px;text-align:left;white-space:nowrap;">°</div>
<svg style="position:absolute;left:918.8px;top:1559.8px;" width="24" height="24" viewBox="0 0 24 24"><polygon points="12,1 23,12 12,23 1,12" fill="none" stroke="#080808" stroke-width="2.2" stroke-linejoin="round"/></svg>
<div style="position:absolute;left:375px;top:1626.9px;width:243px;height:4.0px;background:#121212;border-radius:2px"></div>
<svg style="position:absolute;left:485px;top:1617.9px;" width="22" height="22" viewBox="0 0 22 22"><path d="M4,0 H18 Q22,0 22,4 V12 L11,22 L0,12 V4 Q0,0 4,0 Z" fill="#8c8c8c"/></svg>
<div style="position:absolute;left:668.00px;top:1616.47px;width:100px;height:28.5px;line-height:28.5px;font-size:28.5px;font-weight:400;color:#dcdcdc;letter-spacing:0px;text-align:right;white-space:nowrap;">0</div>
<svg style="position:absolute;left:918.8px;top:1616.9px;" width="24" height="24" viewBox="0 0 24 24"><polygon points="12,1 23,12 12,23 1,12" fill="none" stroke="#080808" stroke-width="2.2" stroke-linejoin="round"/></svg>
<div style="position:absolute;left:738.8px;top:1672.3px;width:27.5px;height:27.40000000000009px;background:#1c1c1c;border:2px solid #8a8a8a;border-radius:5px"></div>
<div style="position:absolute;left:738.8px;top:1729.4px;width:27.5px;height:27.40000000000009px;background:#1c1c1c;border:2px solid #8a8a8a;border-radius:5px"></div>
<div style="position:absolute;left:375px;top:1798.2px;width:243px;height:4.0px;background:#121212;border-radius:2px"></div>
<svg style="position:absolute;left:554.2px;top:1789.2px;" width="22" height="22" viewBox="0 0 22 22"><path d="M4,0 H18 Q22,0 22,4 V12 L11,22 L0,12 V4 Q0,0 4,0 Z" fill="#8c8c8c"/></svg>
<div style="position:absolute;left:568.00px;top:1787.77px;width:200px;height:28.5px;line-height:28.5px;font-size:28.5px;font-weight:400;color:#dcdcdc;letter-spacing:0.3px;text-align:right;white-space:nowrap;">80.0</div>
<div style="position:absolute;left:781.00px;top:1784.39px;width:800px;height:26px;line-height:26px;font-size:26px;font-weight:400;color:#cfcfcf;letter-spacing:0px;text-align:left;white-space:nowrap;">%</div>
<svg style="position:absolute;left:918.8px;top:1788.2px;" width="24" height="24" viewBox="0 0 24 24"><polygon points="12,1 23,12 12,23 1,12" fill="none" stroke="#080808" stroke-width="2.2" stroke-linejoin="round"/></svg>
<div style="position:absolute;left:738.8px;top:1843.6px;width:27.5px;height:27.40000000000009px;background:#5b50e8;border-radius:5px"></div>
<svg style="position:absolute;left:740px;top:1844.3px;" width="26" height="26" viewBox="0 0 26 26"><polyline points="6.5,13.5 11,18.5 19.5,7" fill="none" stroke="#080808" stroke-width="3" stroke-linecap="round" stroke-linejoin="round"/></svg>
<div style="position:absolute;left:47px;top:1891.5px;width:947px;height:4.5px;background:#1c1c1c;"></div>
<div style="position:absolute;left:103.00px;top:1913.05px;width:800px;height:29px;line-height:29px;font-size:29px;font-weight:400;color:#dedede;letter-spacing:0px;text-align:left;white-space:nowrap;">Text</div>
<div style="position:absolute;left:1023px;top:200.5px;width:3px;height:1719.5px;background:#000;"></div>
<div style="position:absolute;left:1026px;top:200.5px;width:298px;height:69.5px;background:#080808;"></div>
<div style="position:absolute;left:1324px;top:200.5px;width:291px;height:69.5px;background:#121212;"></div>
<div style="position:absolute;left:1615px;top:200.5px;width:2.5px;height:69.5px;background:#000;"></div>
<div style="position:absolute;left:1617.5px;top:200.5px;width:298.5px;height:69.5px;background:#121212;"></div>
<div style="position:absolute;left:1026px;top:270px;width:890px;height:2.5px;background:#000;"></div>
<div style="position:absolute;left:1023.30px;top:220.30px;width:300px;height:30px;line-height:30px;font-size:30px;font-weight:700;color:#5b50e8;letter-spacing:-0.9px;text-align:center;white-space:nowrap;">Layers</div>
<div style="position:absolute;left:1319.20px;top:220.30px;width:300px;height:30px;line-height:30px;font-size:30px;font-weight:700;color:#bdbdbd;letter-spacing:-0.7px;text-align:center;white-space:nowrap;">Media</div>
<div style="position:absolute;left:1616.00px;top:220.30px;width:300px;height:30px;line-height:30px;font-size:30px;font-weight:700;color:#bdbdbd;letter-spacing:-1.2px;text-align:center;white-space:nowrap;">Audio</div>
<div style="position:absolute;left:1916px;top:200.5px;width:2.5px;height:1536.9px;background:#000;"></div>
<div style="position:absolute;left:1026px;top:272.5px;width:890px;height:1409.9px;background:#101010;"></div>
<div style="position:absolute;left:1026px;top:357.8px;width:890px;height:2.1999999999999886px;background:#080808;"></div>
<div style="position:absolute;left:1026px;top:445.5px;width:890px;height:2.3000000000000114px;background:#080808;"></div>
<div style="position:absolute;left:1026px;top:447.8px;width:890px;height:85.19999999999999px;background:#454545;"></div>
<div style="position:absolute;left:1026px;top:533px;width:890px;height:2.2999999999999545px;background:#080808;"></div>
<div style="position:absolute;left:1026px;top:621px;width:890px;height:2.2999999999999545px;background:#0a0a0a;"></div>
<svg style="position:absolute;left:1319.5px;top:302px;" width="26" height="32" viewBox="0 0 26 32"><path d="M0.5,-0.4 H11.75 V12.5 H24.5 V30.7 H0.5 Z" fill="#8a8a8a"/><path d="M13.1,-0.4 V10.3 H24.4 Z" fill="#8a8a8a"/></svg>
<div style="position:absolute;left:1365.80px;top:300.60px;width:800px;height:28px;line-height:28px;font-size:28px;font-weight:400;color:#cdcdcd;letter-spacing:0.6px;text-align:left;white-space:nowrap;">Project</div>
<svg style="position:absolute;left:1860px;top:302.5px;" width="32" height="28" viewBox="0 0 32 28"><path d="M2.95,14.9 V7.8 A5.85,5.85 0 0 1 14.65,7.8 V12.5" fill="none" stroke="#a6a6a6" stroke-width="2.5"/><rect x="11" y="12.1" width="19.1" height="13.5" rx="1" fill="#a6a6a6"/></svg>
<div style="position:absolute;left:1045px;top:388.5px;width:28px;height:28.0px;background:#3c3c3c;border-radius:5px"></div>
<svg style="position:absolute;left:1045px;top:388.5px;" width="28" height="28" viewBox="0 0 28 28"><polyline points="7,14.5 11.8,19.5 21,8.5" fill="none" stroke="#e6e6e6" stroke-width="3" stroke-linecap="round" stroke-linejoin="round"/></svg>
<div style="position:absolute;left:1099.4px;top:364.8px;width:154.2px;height:73px;border:2px solid #666;background-color:#2c2c2c;background-image:linear-gradient(45deg,#3a3a3a 25%,transparent 25%,transparent 75%,#3a3a3a 75%),linear-gradient(45deg,#3a3a3a 25%,transparent 25%,transparent 75%,#3a3a3a 75%);background-size:11.0px 11.0px;background-position:0 0,5.5px 5.5px;"></div>
<div style="position:absolute;left:1116px;top:366.8px;width:122px;height:68.89999999999998px;background:#535353;"></div>
<div style="position:absolute;left:1142.00px;top:391.15px;width:60px;height:14px;line-height:14px;font-size:14px;font-weight:700;color:#cfcfcf;letter-spacing:0px;text-align:center;white-space:nowrap;">···</div>
<svg style="position:absolute;left:1278.4px;top:394px;" width="22" height="17.5" viewBox="0 0 22 17.5"><polygon points="0,0 22,0 11,17.5" fill="#8a8a8a"/></svg>
<svg style="position:absolute;left:1316.5px;top:389.6px;" width="33" height="31" viewBox="0 0 33 31"><rect x="7" y="9" width="26" height="21" fill="#9c9c9c"/><rect x="0" y="0" width="25.3" height="21.3" fill="#9c9c9c" stroke="#101010" stroke-width="3"/></svg>
<div style="position:absolute;left:1365.80px;top:388.30px;width:800px;height:28px;line-height:28px;font-size:28px;font-weight:400;color:#cdcdcd;letter-spacing:0.6px;text-align:left;white-space:nowrap;text-decoration:underline;text-underline-offset:4px;text-decoration-thickness:1.5px">Group</div>
<svg style="position:absolute;left:1825px;top:388px;" width="27" height="31" viewBox="0 0 27 31"><rect x="0" y="0.2" width="21.2" height="5.6" fill="#555"/><rect x="0" y="7.4" width="9.3" height="22.3" fill="#6e6e6e"/><rect x="10.8" y="7.4" width="15.2" height="15.4" fill="#a2a2a2"/></svg>
<svg style="position:absolute;left:1860px;top:390px;" width="32" height="28" viewBox="0 0 32 28"><path d="M2.95,14.9 V7.8 A5.85,5.85 0 0 1 14.65,7.8 V12.5" fill="none" stroke="#a6a6a6" stroke-width="2.5"/><rect x="11" y="12.1" width="19.1" height="13.5" rx="1" fill="#a6a6a6"/></svg>
<div style="position:absolute;left:1045px;top:476px;width:28px;height:28px;background:#5c5c5c;border-radius:5px"></div>
<svg style="position:absolute;left:1045px;top:476px;" width="28" height="28" viewBox="0 0 28 28"><polyline points="7,14.5 11.8,19.5 21,8.5" fill="none" stroke="#e6e6e6" stroke-width="3" stroke-linecap="round" stroke-linejoin="round"/></svg>
<div style="position:absolute;left:1099.4px;top:452.5px;width:154.2px;height:73px;border:2px solid #6e6e6e;background-color:#2e2e2e;background-image:linear-gradient(45deg,#3b3b3b 25%,transparent 25%,transparent 75%,#3b3b3b 75%),linear-gradient(45deg,#3b3b3b 25%,transparent 25%,transparent 75%,#3b3b3b 75%);background-size:11.0px 11.0px;background-position:0 0,5.5px 5.5px;"></div>
<div style="position:absolute;left:1096.50px;top:480.53px;width:160px;height:16.5px;line-height:16.5px;font-size:16.5px;font-weight:400;color:#f0f0f0;letter-spacing:-0.35px;text-align:center;white-space:nowrap;">This is a placeholder</div>
<svg style="position:absolute;left:1358.9px;top:481.7px;" width="21.5" height="23.5" viewBox="0 0 21.5 23.5"><path d="M0.5,0.5 H21 V6 H20 Q19.5,2 15,2 H12 V21.5 H15.5 V23 H6 V21.5 H9.5 V2 H6.5 Q2,2 1.5,6 H0.5 Z" fill="#aaaaaa"/></svg>
<div style="position:absolute;left:1404.00px;top:476.27px;width:800px;height:28.5px;line-height:28.5px;font-size:28.5px;font-weight:700;color:#f2f2f2;letter-spacing:-0.4px;text-align:left;white-space:nowrap;">This is a placeholder</div>
<svg style="position:absolute;left:1860px;top:478px;" width="32" height="28" viewBox="0 0 32 28"><path d="M2.95,14.9 V7.8 A5.85,5.85 0 0 1 14.65,7.8 V12.5" fill="none" stroke="#a6a6a6" stroke-width="2.5"/><rect x="11" y="12.1" width="19.1" height="13.5" rx="1" fill="#a6a6a6"/></svg>
<div style="position:absolute;left:1045px;top:563.5px;width:28px;height:28.0px;background:#3c3c3c;border-radius:5px"></div>
<svg style="position:absolute;left:1045px;top:563.5px;" width="28" height="28" viewBox="0 0 28 28"><polyline points="7,14.5 11.8,19.5 21,8.5" fill="none" stroke="#e6e6e6" stroke-width="3" stroke-linecap="round" stroke-linejoin="round"/></svg>
<div style="position:absolute;left:1099.4px;top:540px;width:154.2px;height:73px;border:2px solid #666;background-color:#2c2c2c;background-image:linear-gradient(45deg,#3a3a3a 25%,transparent 25%,transparent 75%,#3a3a3a 75%),linear-gradient(45deg,#3a3a3a 25%,transparent 25%,transparent 75%,#3a3a3a 75%);background-size:11.0px 11.0px;background-position:0 0,5.5px 5.5px;"></div>
<div style="position:absolute;left:1116px;top:542px;width:122px;height:69px;background:#535353;"></div>
<svg style="position:absolute;left:1354px;top:565px;" width="32" height="31" viewBox="0 0 32 31"><rect x="0" y="0" width="31" height="30" rx="1.5" fill="#a9a9a9"/><rect x="0" y="15" width="15.5" height="15" fill="#555"/><rect x="14.6" y="0" width="1.8" height="30" fill="#101010"/><rect x="0" y="14.1" width="31" height="1.8" fill="#101010"/><circle cx="15.5" cy="15" r="10" fill="#9a9a9a" stroke="#181818" stroke-width="2.2"/><text x="15.5" y="21.2" font-size="17" font-family="Liberation Sans" text-anchor="middle" fill="#222">2</text></svg>
<div style="position:absolute;left:1404.00px;top:564.80px;width:800px;height:28px;line-height:28px;font-size:28px;font-weight:400;color:#cdcdcd;letter-spacing:0.85px;text-align:left;white-space:nowrap;">Color Solid</div>
<svg style="position:absolute;left:1860px;top:566px;" width="32" height="28" viewBox="0 0 32 28"><path d="M2.95,14.9 V7.8 A5.85,5.85 0 0 1 14.65,7.8 V12.5" fill="none" stroke="#a6a6a6" stroke-width="2.5"/><rect x="11" y="12.1" width="19.1" height="13.5" rx="1" fill="#a6a6a6"/></svg>
<div style="position:absolute;left:1026px;top:1682.4px;width:890px;height:2.599999999999909px;background:#000;"></div>
<div style="position:absolute;left:1026px;top:1685px;width:890px;height:49.700000000000045px;background:#101010;"></div>
<div style="position:absolute;left:1026px;top:1734.7px;width:2814px;height:2.7000000000000455px;background:#000;"></div>
<svg style="position:absolute;left:1049px;top:1693px;" width="34" height="32" viewBox="0 0 34 32"><circle cx="13" cy="13" r="10.5" fill="none" stroke="#d0d0d0" stroke-width="2.6"/><line x1="20.5" y1="20.5" x2="30" y2="30" stroke="#d0d0d0" stroke-width="2.8" stroke-linecap="round"/></svg>
<svg style="position:absolute;left:1127.8px;top:1692px;" width="36" height="30" viewBox="0 0 36 30"><rect x="1.3" y="1.3" width="33" height="27" fill="none" stroke="#c4c4c4" stroke-width="2.6"/><polyline points="1.3,10.5 24.5,10.5 24.5,28" fill="none" stroke="#c4c4c4" stroke-width="2.6"/></svg>
<svg style="position:absolute;left:1699px;top:1692px;" width="35" height="29.5" viewBox="0 0 35 29.5"><rect x="0" y="0" width="35" height="29.5" rx="3.5" fill="#5b50e8"/><rect x="8.50" y="2.30" width="6.20" height="6.30" fill="#0a0a0a"/><rect x="20.90" y="2.30" width="6.20" height="6.30" fill="#0a0a0a"/><rect x="2.30" y="8.60" width="6.20" height="6.30" fill="#0a0a0a"/><rect x="14.70" y="8.60" width="6.20" height="6.30" fill="#0a0a0a"/><rect x="27.10" y="8.60" width="6.20" height="6.30" fill="#0a0a0a"/><rect x="8.50" y="14.90" width="6.20" height="6.30" fill="#0a0a0a"/><rect x="20.90" y="14.90" width="6.20" height="6.30" fill="#0a0a0a"/><rect x="2.30" y="21.20" width="6.20" height="6.30" fill="#0a0a0a"/><rect x="14.70" y="21.20" width="6.20" height="6.30" fill="#0a0a0a"/><rect x="27.10" y="21.20" width="6.20" height="6.30" fill="#0a0a0a"/></svg>
<svg style="position:absolute;left:1778px;top:1692px;" width="31.5" height="31.5" viewBox="0 0 31.5 31.5"><circle cx="15.75" cy="15.75" r="12.60" fill="#5b50e8"/><polygon points="13.39,3.94 14.49,0 17.01,0 18.11,3.94" fill="#5b50e8" transform="rotate(0.0 15.75 15.75)"/><polygon points="13.39,3.94 14.49,0 17.01,0 18.11,3.94" fill="#5b50e8" transform="rotate(25.714285714285715 15.75 15.75)"/><polygon points="13.39,3.94 14.49,0 17.01,0 18.11,3.94" fill="#5b50e8" transform="rotate(51.42857142857143 15.75 15.75)"/><polygon points="13.39,3.94 14.49,0 17.01,0 18.11,3.94" fill="#5b50e8" transform="rotate(77.14285714285714 15.75 15.75)"/><polygon points="13.39,3.94 14.49,0 17.01,0 18.11,3.94" fill="#5b50e8" transform="rotate(102.85714285714286 15.75 15.75)"/><polygon points="13.39,3.94 14.49,0 17.01,0 18.11,3.94" fill="#5b50e8" transform="rotate(128.57142857142858 15.75 15.75)"/><polygon points="13.39,3.94 14.49,0 17.01,0 18.11,3.94" fill="#5b50e8" transform="rotate(154.28571428571428 15.75 15.75)"/><polygon points="13.39,3.94 14.49,0 17.01,0 18.11,3.94" fill="#5b50e8" transform="rotate(180.0 15.75 15.75)"/><polygon points="13.39,3.94 14.49,0 17.01,0 18.11,3.94" fill="#5b50e8" transform="rotate(205.71428571428572 15.75 15.75)"/><polygon points="13.39,3.94 14.49,0 17.01,0 18.11,3.94" fill="#5b50e8" transform="rotate(231.42857142857142 15.75 15.75)"/><polygon points="13.39,3.94 14.49,0 17.01,0 18.11,3.94" fill="#5b50e8" transform="rotate(257.14285714285717 15.75 15.75)"/><polygon points="13.39,3.94 14.49,0 17.01,0 18.11,3.94" fill="#5b50e8" transform="rotate(282.85714285714283 15.75 15.75)"/><polygon points="13.39,3.94 14.49,0 17.01,0 18.11,3.94" fill="#5b50e8" transform="rotate(308.57142857142856 15.75 15.75)"/><polygon points="13.39,3.94 14.49,0 17.01,0 18.11,3.94" fill="#5b50e8" transform="rotate(334.2857142857143 15.75 15.75)"/><circle cx="15.75" cy="15.75" r="9.13" fill="#101010"/></svg>
<svg style="position:absolute;left:1855px;top:1692px;" width="37" height="31.5" viewBox="0 0 37 31.5"><rect x="8" y="0" width="28.2" height="21.3" rx="4" fill="#5b50e8"/><rect x="1.1" y="10.4" width="27.8" height="20.3" rx="3.5" fill="none" stroke="#101010" stroke-width="4.6"/><rect x="1.1" y="10.4" width="27.8" height="20.3" rx="3.5" fill="none" stroke="#5b50e8" stroke-width="2"/></svg>
<div style="position:absolute;left:1026px;top:1737.4px;width:2814px;height:70.39999999999986px;background:#262626;"></div>
<div style="position:absolute;left:1026px;top:1807.8px;width:2814px;height:2.7999999999999545px;background:#000;"></div>
<svg style="position:absolute;left:1068px;top:1757px;" width="46" height="34" viewBox="0 0 46 34"><path d="M6,11.6 H12.5 L20.8,5.5 V27.3 L12.5,21.6 H6 Z" fill="#c2c2c2"/><path d="M26,9 A10,10 0 0 1 26,24" fill="none" stroke="#c2c2c2" stroke-width="2.4"/><path d="M31,4 A16,16 0 0 1 31,29" fill="none" stroke="#c2c2c2" stroke-width="2.4"/><line x1="0" y1="2" x2="46" y2="31.8" stroke="#262626" stroke-width="6"/><line x1="2.4" y1="3.7" x2="43.8" y2="30.5" stroke="#c2c2c2" stroke-width="2.4" stroke-linecap="round"/></svg>
<svg style="position:absolute;left:1163px;top:1757px;" width="44" height="36" viewBox="0 0 44 36"><g fill="none" stroke="#5b50e8" stroke-width="2.5" stroke-linecap="round" stroke-linejoin="round"><path d="M27.5,7.9 H12.5 A9.45,9.45 0 0 0 12.5,26.8"/><path d="M30.6,7.9 H31.4 A9.45,9.45 0 0 1 31.4,26.8 H15.4"/><polyline points="21,1.6 27.5,7.9 21,14.2"/><polyline points="22,20.5 15.4,26.8 22,33"/></g></svg>
<svg style="position:absolute;left:1258px;top:1753px;" width="50" height="40" viewBox="0 0 50 40"><path d="M37.95,14.4 A17.3,17.3 0 1 0 30.45,35.6" fill="none" stroke="#c92a2a" stroke-width="2.5" stroke-linecap="round"/><rect x="31.3" y="22.1" width="11" height="11" transform="rotate(45 36.8 27.6)" fill="none" stroke="#d02828" stroke-width="3.4"/></svg>
<div style="position:absolute;left:1026px;top:1810.6px;width:852.3px;height:50.0px;background:#101010;"></div>
<div style="position:absolute;left:1026px;top:1860.6px;width:2814px;height:2.2000000000000455px;background:#000;"></div>
<div style="position:absolute;left:1878.3px;top:1810.6px;width:2.7000000000000455px;height:109.40000000000009px;background:#000;"></div>
<div style="position:absolute;left:1045.50px;top:1823.75px;width:800px;height:29px;line-height:29px;font-size:29px;font-weight:400;color:#a3a3a3;letter-spacing:0.2px;text-align:left;white-space:nowrap;">Timeline</div>
<svg style="position:absolute;left:1663.4px;top:1818px;" width="35" height="29.5" viewBox="0 0 35 29.5"><rect x="0" y="0" width="35" height="29.5" rx="3.5" fill="#5b50e8"/><rect x="8.50" y="2.30" width="6.20" height="6.30" fill="#0a0a0a"/><rect x="20.90" y="2.30" width="6.20" height="6.30" fill="#0a0a0a"/><rect x="2.30" y="8.60" width="6.20" height="6.30" fill="#0a0a0a"/><rect x="14.70" y="8.60" width="6.20" height="6.30" fill="#0a0a0a"/><rect x="27.10" y="8.60" width="6.20" height="6.30" fill="#0a0a0a"/><rect x="8.50" y="14.90" width="6.20" height="6.30" fill="#0a0a0a"/><rect x="20.90" y="14.90" width="6.20" height="6.30" fill="#0a0a0a"/><rect x="2.30" y="21.20" width="6.20" height="6.30" fill="#0a0a0a"/><rect x="14.70" y="21.20" width="6.20" height="6.30" fill="#0a0a0a"/><rect x="27.10" y="21.20" width="6.20" height="6.30" fill="#0a0a0a"/></svg>
<svg style="position:absolute;left:1742.8px;top:1818px;" width="31.5" height="31.5" viewBox="0 0 31.5 31.5"><circle cx="15.75" cy="15.75" r="12.60" fill="#5b50e8"/><polygon points="13.39,3.94 14.49,0 17.01,0 18.11,3.94" fill="#5b50e8" transform="rotate(0.0 15.75 15.75)"/><polygon points="13.39,3.94 14.49,0 17.01,0 18.11,3.94" fill="#5b50e8" transform="rotate(25.714285714285715 15.75 15.75)"/><polygon points="13.39,3.94 14.49,0 17.01,0 18.11,3.94" fill="#5b50e8" transform="rotate(51.42857142857143 15.75 15.75)"/><polygon points="13.39,3.94 14.49,0 17.01,0 18.11,3.94" fill="#5b50e8" transform="rotate(77.14285714285714 15.75 15.75)"/><polygon points="13.39,3.94 14.49,0 17.01,0 18.11,3.94" fill="#5b50e8" transform="rotate(102.85714285714286 15.75 15.75)"/><polygon points="13.39,3.94 14.49,0 17.01,0 18.11,3.94" fill="#5b50e8" transform="rotate(128.57142857142858 15.75 15.75)"/><polygon points="13.39,3.94 14.49,0 17.01,0 18.11,3.94" fill="#5b50e8" transform="rotate(154.28571428571428 15.75 15.75)"/><polygon points="13.39,3.94 14.49,0 17.01,0 18.11,3.94" fill="#5b50e8" transform="rotate(180.0 15.75 15.75)"/><polygon points="13.39,3.94 14.49,0 17.01,0 18.11,3.94" fill="#5b50e8" transform="rotate(205.71428571428572 15.75 15.75)"/><polygon points="13.39,3.94 14.49,0 17.01,0 18.11,3.94" fill="#5b50e8" transform="rotate(231.42857142857142 15.75 15.75)"/><polygon points="13.39,3.94 14.49,0 17.01,0 18.11,3.94" fill="#5b50e8" transform="rotate(257.14285714285717 15.75 15.75)"/><polygon points="13.39,3.94 14.49,0 17.01,0 18.11,3.94" fill="#5b50e8" transform="rotate(282.85714285714283 15.75 15.75)"/><polygon points="13.39,3.94 14.49,0 17.01,0 18.11,3.94" fill="#5b50e8" transform="rotate(308.57142857142856 15.75 15.75)"/><polygon points="13.39,3.94 14.49,0 17.01,0 18.11,3.94" fill="#5b50e8" transform="rotate(334.2857142857143 15.75 15.75)"/><circle cx="15.75" cy="15.75" r="9.13" fill="#101010"/></svg>
<svg style="position:absolute;left:1820px;top:1818px;" width="37" height="31.5" viewBox="0 0 37 31.5"><rect x="8" y="0" width="28.2" height="21.3" rx="4" fill="#5b50e8"/><rect x="1.1" y="10.4" width="27.8" height="20.3" rx="3.5" fill="none" stroke="#101010" stroke-width="4.6"/><rect x="1.1" y="10.4" width="27.8" height="20.3" rx="3.5" fill="none" stroke="#5b50e8" stroke-width="2"/></svg>
<div style="position:absolute;left:1026px;top:1862.8px;width:852.3px;height:49.700000000000045px;background:#101010;"></div>
<div style="position:absolute;left:1026px;top:1912.5px;width:852.3px;height:2.5px;background:#000;"></div>
<div style="position:absolute;left:1026px;top:1915px;width:852.3px;height:5px;background:#101010;"></div>
<div style="position:absolute;left:1918.5px;top:200.5px;width:1921.5px;height:69.5px;background:#121212;"></div>
<div style="position:absolute;left:1918.5px;top:270px;width:1921.5px;height:2.5px;background:#000;"></div>
<div style="position:absolute;left:1918.5px;top:272.5px;width:1921.5px;height:1314.5px;background:#50524f;"></div>
<div style="position:absolute;left:2434.60px;top:758.13px;width:2200px;height:180px;line-height:180px;font-size:180px;font-weight:400;color:#ffffff;letter-spacing:-2.6px;text-align:left;white-space:nowrap;">This is a placeholder</div>
<div style="position:absolute;left:1918.5px;top:1587px;width:1921.5px;height:38.40000000000009px;background:#101010;"></div>
<div style="position:absolute;left:1918.5px;top:1625.4px;width:1921.5px;height:2.099999999999909px;background:#050505;"></div>
<div style="position:absolute;left:1918.5px;top:1627.5px;width:1921.5px;height:36.09999999999991px;background:#101010;"></div>
<div style="position:absolute;left:1984.8px;top:1627.5px;width:1855.2px;height:36.09999999999991px;background:#142a4b;"></div>
<div style="position:absolute;left:1998.40px;top:1633.07px;width:800px;height:27.8px;line-height:27.8px;font-size:27.8px;font-weight:400;color:#8ea2c4;letter-spacing:0.05px;text-align:left;white-space:nowrap;">This is a placeholder</div>
<div style="position:absolute;left:1918.5px;top:1663.6px;width:1921.5px;height:2.400000000000091px;background:#050505;"></div>
<svg style="position:absolute;left:1972px;top:1589px;" width="22" height="37" viewBox="0 0 22 37"><polygon points="1,6 13,16 1,31" fill="#c4c4c4"/><path d="M7.5,1.5 H19.5 V13 L15,18 V36 H12 V18 L7.5,13 Z" fill="none" stroke="#c4c4c4" stroke-width="2.4"/><rect x="12" y="4" width="3" height="32" fill="#c4c4c4"/></svg>
<div style="position:absolute;left:1918.5px;top:1666px;width:1921.5px;height:68.70000000000005px;background:#101010;"></div>
<svg style="position:absolute;left:1970.8px;top:1683.4px;" width="21" height="37" viewBox="0 0 21 37"><path d="M0,0 L19.5,19.5 L11.5,20.5 L16.5,33 L12,35.5 L7,23 L0,28.5 Z" fill="#d2d2d2"/></svg>
<svg style="position:absolute;left:2017.7px;top:1694.5px;" width="18" height="11" viewBox="0 0 18 11"><polyline points="1.5,1.5 9.0,9.5 16.5,1.5" fill="none" stroke="#d2d2d2" stroke-width="2.8" stroke-linecap="round" stroke-linejoin="round"/></svg>
<svg style="position:absolute;left:2086px;top:1682.5px;" width="37" height="37.5" viewBox="0 0 37 37.5"><g fill="none" stroke="#d2d2d2" stroke-width="2.6"><ellipse cx="18.5" cy="18.75" rx="17" ry="9" transform="rotate(-25 18.5 18.75)"/><ellipse cx="18.5" cy="18.75" rx="9" ry="17" transform="rotate(-25 18.5 18.75)"/></g></svg>
<svg style="position:absolute;left:2182.8px;top:1684px;" width="32" height="34" viewBox="0 0 32 34"><path d="M9,33.5 Q6,30 3,25 L0.8,20.5 Q0,18 2.5,17.5 Q4.5,17.3 6,19.5 L8.5,23 L7,6.5 Q6.8,4 9,3.8 Q11.2,3.7 11.5,6 L13,17 L13.2,2.5 Q13.3,0.3 15.5,0.3 Q17.7,0.3 17.8,2.5 L18,17 L20.5,4 Q21,1.8 23,2.2 Q25,2.6 24.8,5 L22.8,18 L27,9 Q28,7 30,7.8 Q31.8,8.7 31,11 L26,26 Q24.5,31 22,33.5 Z" fill="#d2d2d2"/></svg>
<svg style="position:absolute;left:2236.0px;top:1694.5px;" width="18" height="11" viewBox="0 0 18 11"><polyline points="1.5,1.5 9.0,9.5 16.5,1.5" fill="none" stroke="#d2d2d2" stroke-width="2.8" stroke-linecap="round" stroke-linejoin="round"/></svg>
<svg style="position:absolute;left:3105px;top:1686px;" width="36" height="29" viewBox="0 0 36 29"><rect x="1.3" y="1.3" width="33" height="26" rx="3" fill="#101010" stroke="#d2d2d2" stroke-width="2.6"/><rect x="4.5" y="4.5" width="26.6" height="19.6" fill="#cdcdcd"/></svg>
<svg style="position:absolute;left:3159.5px;top:1694.5px;" width="18" height="11" viewBox="0 0 18 11"><polyline points="1.5,1.5 9.0,9.5 16.5,1.5" fill="none" stroke="#d2d2d2" stroke-width="2.8" stroke-linecap="round" stroke-linejoin="round"/></svg>
<svg style="position:absolute;left:3207px;top:1682px;" width="46" height="37" viewBox="0 0 46 37"><path d="M3.5,33 Q6,18 13,12 Q22,6 31,5" fill="none" stroke="#d2d2d2" stroke-width="2"/><circle cx="4.3" cy="33" r="3.2" fill="#101010" stroke="#d2d2d2" stroke-width="2"/><circle cx="13.5" cy="12.5" r="3.2" fill="#101010" stroke="#d2d2d2" stroke-width="2"/><path d="M34.5,0.5 L41,16 L38,24 H31 L28,16 Z" fill="#d2d2d2"/><rect x="28.5" y="29.5" width="15" height="6" fill="#d2d2d2"/><line x1="34.5" y1="9" x2="34.5" y2="18" stroke="#101010" stroke-width="1.6"/></svg>
<svg style="position:absolute;left:3269.5px;top:1694.5px;" width="18" height="11" viewBox="0 0 18 11"><polyline points="1.5,1.5 9.0,9.5 16.5,1.5" fill="none" stroke="#d2d2d2" stroke-width="2.8" stroke-linecap="round" stroke-linejoin="round"/></svg>
<svg style="position:absolute;left:3337.7px;top:1682.5px;" width="37" height="37" viewBox="0 0 37 37"><line x1="35" y1="2" x2="16" y2="21" stroke="#d2d2d2" stroke-width="3" stroke-linecap="round"/><path d="M0,36 Q2,27 6,23 Q10,19 14,22.5 Q17,26 13,30 Q9,34 0,36 Z" fill="#d2d2d2"/></svg>
<svg style="position:absolute;left:3436px;top:1684px;" width="30" height="32" viewBox="0 0 30 32"><path d="M0,0 H29.5 V9 H28 Q27,3.5 22,3.5 H17.5 V28.5 H22 V31.5 H7.5 V28.5 H12 V3.5 H7.5 Q2.5,3.5 1.5,9 H0 Z" fill="#5b50e8"/></svg>
<svg style="position:absolute;left:3488.0px;top:1694.5px;" width="18" height="11" viewBox="0 0 18 11"><polyline points="1.5,1.5 9.0,9.5 16.5,1.5" fill="none" stroke="#5b50e8" stroke-width="3.0" stroke-linecap="round" stroke-linejoin="round"/></svg>
<svg style="position:absolute;left:3540px;top:1685px;" width="40" height="31" viewBox="0 0 40 31"><rect x="1.5" y="1.5" width="37" height="28" fill="#3a3a3a" stroke="#575757" stroke-width="3"/><rect x="9.5" y="9" width="21" height="13" fill="#111" stroke="#5c5c5c" stroke-width="3"/></svg>
<svg style="position:absolute;left:3597.5px;top:1694.5px;" width="18" height="11" viewBox="0 0 18 11"><polyline points="1.5,1.5 9.0,9.5 16.5,1.5" fill="none" stroke="#7a7a7a" stroke-width="2.8" stroke-linecap="round" stroke-linejoin="round"/></svg>
<svg style="position:absolute;left:2617.7px;top:1761.6px;" width="18" height="23" viewBox="0 0 18 23"><rect x="0" y="0" width="3" height="23" fill="#bdbdbd"/><polygon points="17.6,0 3.5,11.5 17.6,23" fill="#bdbdbd"/></svg>
<svg style="position:absolute;left:2694.6px;top:1760.8px;" width="21" height="24.2" viewBox="0 0 21 24.2"><polygon points="0,0 21,12.1 0,24.2" fill="#bdbdbd"/></svg>
<svg style="position:absolute;left:2830px;top:1754px;" width="200" height="40" viewBox="0 0 200 40"><ellipse cx="18.59999999999991" cy="18.8" rx="12.6" ry="17.6" fill="none" stroke="#5e5e5e" stroke-width="2.2"/><ellipse cx="49.59999999999991" cy="18.8" rx="12.6" ry="17.6" fill="none" stroke="#5e5e5e" stroke-width="2.2"/><ellipse cx="80.59999999999991" cy="18.8" rx="12.6" ry="17.6" fill="none" stroke="#5e5e5e" stroke-width="2.2"/><ellipse cx="111.59999999999991" cy="18.8" rx="12.6" ry="17.6" fill="none" stroke="#5e5e5e" stroke-width="2.2"/><path d="M149,36.5 V1.5 L131.5,25.5 H157" fill="none" stroke="#b4b4b4" stroke-width="2.3" stroke-linejoin="miter"/><path d="M185,1.5 H167 L165,18 Q169,13.5 175.5,13.5 Q187,13.5 187,24.5 Q187,36.5 175.5,36.5 Q165.5,36.5 163.5,28" fill="none" stroke="#b4b4b4" stroke-width="2.3"/></svg>
<svg style="position:absolute;left:3132.0px;top:1769.3px;" width="18" height="11" viewBox="0 0 18 11"><polyline points="1.5,1.5 9.0,9.5 16.5,1.5" fill="none" stroke="#c4c4c4" stroke-width="2.8" stroke-linecap="round" stroke-linejoin="round"/></svg>
<svg style="position:absolute;left:3209px;top:1749px;" width="42" height="44" viewBox="0 0 42 44"><circle cx="19.5" cy="24.3" r="17.3" fill="none" stroke="#555" stroke-width="2.2"/><path d="M19.5,7 A17.3,17.3 0 0 1 36.8,24.3" fill="none" stroke="#5b50e8" stroke-width="3"/><polygon points="15.5,1 23.5,1 19.5,6" fill="#5b50e8"/><polygon points="34,22 40.5,24.3 34,28" fill="#5b50e8"/><polyline points="19.5,13 19.5,25 31,25" fill="none" stroke="#ececec" stroke-width="2.6"/></svg>
<div style="position:absolute;left:1881px;top:1810.6px;width:1959px;height:50.0px;background:#111111;"></div>
<div style="position:absolute;left:1881px;top:1862.8px;width:1959px;height:57.200000000000045px;background:#111111;"></div>
<div style="position:absolute;left:2041.0px;top:1874.8px;width:2.0px;height:28.700000000000045px;background:#2c2c2c;"></div>
<div style="position:absolute;left:2100.3px;top:1874.8px;width:2.0px;height:28.700000000000045px;background:#2c2c2c;"></div>
<div style="position:absolute;left:2159.6px;top:1874.8px;width:2.0px;height:28.700000000000045px;background:#2c2c2c;"></div>
<div style="position:absolute;left:2218.9px;top:1874.8px;width:2.0px;height:28.700000000000045px;background:#2c2c2c;"></div>
<div style="position:absolute;left:2278.0px;top:1874.8px;width:2.399999999999636px;height:28.700000000000045px;background:#5a5a5a;"></div>
<div style="position:absolute;left:2285.20px;top:1875.76px;width:800px;height:24.5px;line-height:24.5px;font-size:24.5px;font-weight:400;color:#888888;letter-spacing:0.3px;text-align:left;white-space:nowrap;">6</div>
<div style="position:absolute;left:2337.5px;top:1874.8px;width:2.0px;height:28.700000000000045px;background:#2c2c2c;"></div>
<div style="position:absolute;left:2396.8px;top:1874.8px;width:2.0px;height:28.700000000000045px;background:#2c2c2c;"></div>
<div style="position:absolute;left:2456.1px;top:1874.8px;width:2.0px;height:28.700000000000045px;background:#2c2c2c;"></div>
<div style="position:absolute;left:2515.4px;top:1874.8px;width:2.0px;height:28.700000000000045px;background:#2c2c2c;"></div>
<div style="position:absolute;left:2574.5px;top:1874.8px;width:2.399999999999636px;height:28.700000000000045px;background:#5a5a5a;"></div>
<div style="position:absolute;left:2581.70px;top:1875.76px;width:800px;height:24.5px;line-height:24.5px;font-size:24.5px;font-weight:400;color:#888888;letter-spacing:0.3px;text-align:left;white-space:nowrap;">11</div>
<div style="position:absolute;left:2634.0px;top:1874.8px;width:2.0px;height:28.700000000000045px;background:#2c2c2c;"></div>
<div style="position:absolute;left:2693.3px;top:1874.8px;width:2.0px;height:28.700000000000045px;background:#2c2c2c;"></div>
<div style="position:absolute;left:2752.6px;top:1874.8px;width:2.0px;height:28.700000000000045px;background:#2c2c2c;"></div>
<div style="position:absolute;left:2811.9px;top:1874.8px;width:2.0px;height:28.700000000000045px;background:#2c2c2c;"></div>
<div style="position:absolute;left:2871.0px;top:1874.8px;width:2.399999999999636px;height:28.700000000000045px;background:#5a5a5a;"></div>
<div style="position:absolute;left:2878.20px;top:1875.76px;width:800px;height:24.5px;line-height:24.5px;font-size:24.5px;font-weight:400;color:#888888;letter-spacing:0.3px;text-align:left;white-space:nowrap;">16</div>
<div style="position:absolute;left:2930.5px;top:1874.8px;width:2.0px;height:28.700000000000045px;background:#2c2c2c;"></div>
<div style="position:absolute;left:2989.8px;top:1874.8px;width:2.0px;height:28.700000000000045px;background:#2c2c2c;"></div>
<div style="position:absolute;left:3049.1px;top:1874.8px;width:2.0px;height:28.700000000000045px;background:#2c2c2c;"></div>
<div style="position:absolute;left:3108.4px;top:1874.8px;width:2.0px;height:28.700000000000045px;background:#2c2c2c;"></div>
<div style="position:absolute;left:3167.5px;top:1874.8px;width:2.399999999999636px;height:28.700000000000045px;background:#5a5a5a;"></div>
<div style="position:absolute;left:3174.70px;top:1875.76px;width:800px;height:24.5px;line-height:24.5px;font-size:24.5px;font-weight:400;color:#888888;letter-spacing:0.3px;text-align:left;white-space:nowrap;">21</div>
<div style="position:absolute;left:3227.0px;top:1874.8px;width:2.0px;height:28.700000000000045px;background:#2c2c2c;"></div>
<div style="position:absolute;left:3286.3px;top:1874.8px;width:2.0px;height:28.700000000000045px;background:#2c2c2c;"></div>
<div style="position:absolute;left:3345.6px;top:1874.8px;width:2.0px;height:28.700000000000045px;background:#2c2c2c;"></div>
<div style="position:absolute;left:3404.8999999999996px;top:1874.8px;width:2.0px;height:28.700000000000045px;background:#2c2c2c;"></div>
<div style="position:absolute;left:3464.0px;top:1874.8px;width:2.399999999999636px;height:28.700000000000045px;background:#5a5a5a;"></div>
<div style="position:absolute;left:3471.20px;top:1875.76px;width:800px;height:24.5px;line-height:24.5px;font-size:24.5px;font-weight:400;color:#888888;letter-spacing:0.3px;text-align:left;white-space:nowrap;">26</div>
<div style="position:absolute;left:3523.5px;top:1874.8px;width:2.0px;height:28.700000000000045px;background:#2c2c2c;"></div>
<div style="position:absolute;left:3582.8px;top:1874.8px;width:2.0px;height:28.700000000000045px;background:#2c2c2c;"></div>
<div style="position:absolute;left:3642.1px;top:1874.8px;width:2.0px;height:28.700000000000045px;background:#2c2c2c;"></div>
<div style="position:absolute;left:3701.3999999999996px;top:1874.8px;width:2.0px;height:28.700000000000045px;background:#2c2c2c;"></div>
<div style="position:absolute;left:3760.5px;top:1874.8px;width:2.399999999999636px;height:28.700000000000045px;background:#5a5a5a;"></div>
<div style="position:absolute;left:3767.70px;top:1875.76px;width:800px;height:24.5px;line-height:24.5px;font-size:24.5px;font-weight:400;color:#888888;letter-spacing:0.3px;text-align:left;white-space:nowrap;">31</div>
<div style="position:absolute;left:3820.0px;top:1874.8px;width:2.0px;height:28.700000000000045px;background:#2c2c2c;"></div>
<div style="position:absolute;left:1995.3px;top:1879.4px;width:2.2000000000000455px;height:17.09999999999991px;background:#3c3c3c;"></div>
<div style="position:absolute;left:1981.2px;top:1895px;width:3.0px;height:25px;background:#c8c8c8;"></div>
<svg style="position:absolute;left:1969.5px;top:1874px;" width="26" height="32" viewBox="0 0 26 32"><path d="M3,2 H22.5 V20 L12.75,30 L3,20 Z" fill="#2a2a2a" stroke="#c8c8c8" stroke-width="2.4" stroke-linejoin="round"/><polygon points="2,8 12.5,17.5 2,28" fill="#c8c8c8"/><rect x="12" y="3" width="2.4" height="25" fill="#c8c8c8"/></svg>
</body></html>
